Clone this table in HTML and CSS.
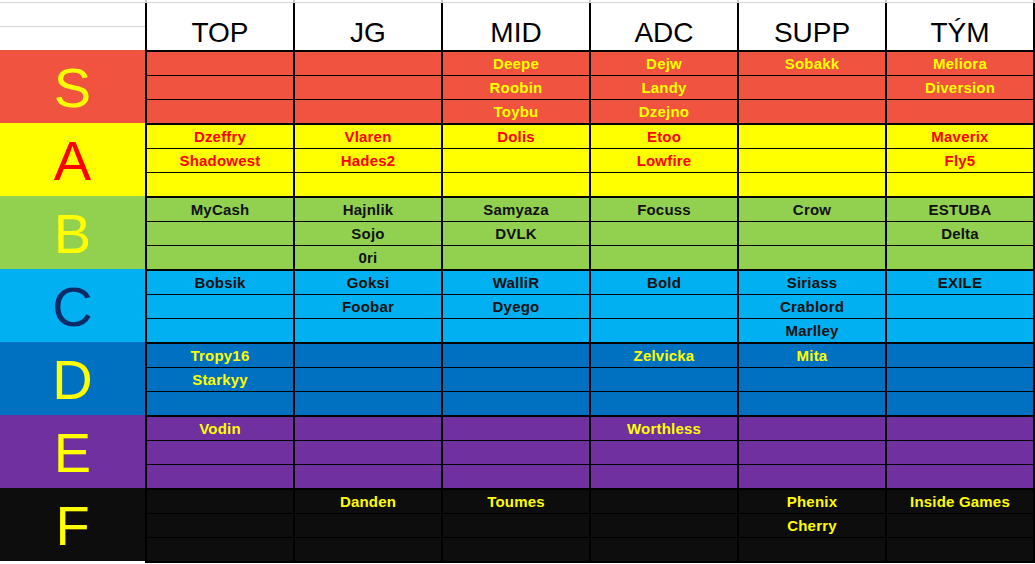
FILE: index.html
```html
<!DOCTYPE html>
<html lang="cs">
<head>
<meta charset="utf-8">
<title>Tier list</title>
<link rel="stylesheet" href="styles.css">
</head>
<body>
<div class="sheet">
  <div class="strip">
    <div class="strip-label"></div>
    <div class="strip-grid"><span></span><span></span><span></span><span></span><span></span><span></span></div>
  </div>

  <div class="head">
    <div class="head-label"><div class="half"></div><div class="half"></div></div>
    <div class="grid head-grid">
      <div class="hcell">TOP</div><div class="hcell">JG</div><div class="hcell">MID</div><div class="hcell">ADC</div><div class="hcell">SUPP</div><div class="hcell">TÝM</div>
    </div>
  </div>

  <div class="tier tier-s">
    <div class="label">S</div>
    <div class="grid">
      <div class="c"></div><div class="c"></div><div class="c">Deepe</div><div class="c">Dejw</div><div class="c">Sobakk</div><div class="c">Meliora</div>
      <div class="c"></div><div class="c"></div><div class="c">Roobin</div><div class="c">Landy</div><div class="c"></div><div class="c">Diversion</div>
      <div class="c"></div><div class="c"></div><div class="c">Toybu</div><div class="c">Dzejno</div><div class="c"></div><div class="c"></div>
    </div>
  </div>

  <div class="tier tier-a">
    <div class="label">A</div>
    <div class="grid">
      <div class="c">Dzeffry</div><div class="c">Vlaren</div><div class="c">Dolis</div><div class="c">Etoo</div><div class="c"></div><div class="c">Maverix</div>
      <div class="c">Shadowest</div><div class="c">Hades2</div><div class="c"></div><div class="c">Lowfire</div><div class="c"></div><div class="c">Fly5</div>
      <div class="c"></div><div class="c"></div><div class="c"></div><div class="c"></div><div class="c"></div><div class="c"></div>
    </div>
  </div>

  <div class="tier tier-b">
    <div class="label">B</div>
    <div class="grid">
      <div class="c">MyCash</div><div class="c">Hajnlik</div><div class="c">Samyaza</div><div class="c">Focuss</div><div class="c">Crow</div><div class="c">ESTUBA</div>
      <div class="c"></div><div class="c">Sojo</div><div class="c">DVLK</div><div class="c"></div><div class="c"></div><div class="c">Delta</div>
      <div class="c"></div><div class="c">0ri</div><div class="c"></div><div class="c"></div><div class="c"></div><div class="c"></div>
    </div>
  </div>

  <div class="tier tier-c">
    <div class="label">C</div>
    <div class="grid">
      <div class="c">Bobsik</div><div class="c">Goksi</div><div class="c">WalliR</div><div class="c">Bold</div><div class="c">Siriass</div><div class="c">EXILE</div>
      <div class="c"></div><div class="c">Foobar</div><div class="c">Dyego</div><div class="c"></div><div class="c">Crablord</div><div class="c"></div>
      <div class="c"></div><div class="c"></div><div class="c"></div><div class="c"></div><div class="c">Marlley</div><div class="c"></div>
    </div>
  </div>

  <div class="tier tier-d">
    <div class="label">D</div>
    <div class="grid">
      <div class="c">Tropy16</div><div class="c"></div><div class="c"></div><div class="c">Zelvicka</div><div class="c">Mita</div><div class="c"></div>
      <div class="c">Starkyy</div><div class="c"></div><div class="c"></div><div class="c"></div><div class="c"></div><div class="c"></div>
      <div class="c"></div><div class="c"></div><div class="c"></div><div class="c"></div><div class="c"></div><div class="c"></div>
    </div>
  </div>

  <div class="tier tier-e">
    <div class="label">E</div>
    <div class="grid">
      <div class="c">Vodin</div><div class="c"></div><div class="c"></div><div class="c">Worthless</div><div class="c"></div><div class="c"></div>
      <div class="c"></div><div class="c"></div><div class="c"></div><div class="c"></div><div class="c"></div><div class="c"></div>
      <div class="c"></div><div class="c"></div><div class="c"></div><div class="c"></div><div class="c"></div><div class="c"></div>
    </div>
  </div>

  <div class="tier tier-f">
    <div class="label">F</div>
    <div class="grid">
      <div class="c"></div><div class="c">Danden</div><div class="c">Toumes</div><div class="c"></div><div class="c">Phenix</div><div class="c">Inside Games</div>
      <div class="c"></div><div class="c"></div><div class="c"></div><div class="c"></div><div class="c">Cherry</div><div class="c"></div>
      <div class="c"></div><div class="c"></div><div class="c"></div><div class="c"></div><div class="c"></div><div class="c"></div>
    </div>
  </div>

  <div class="foot">
    <div class="foot-label"></div>
    <div class="foot-grid"></div>
  </div>
</div>
</body>
</html>
```

FILE: styles.css
```css
html, body {
  margin: 0;
  padding: 0;
  background: #ffffff;
}

.sheet {
  width: 1035px;
  font-family: "Liberation Sans", Arial, sans-serif;
}

/* top spreadsheet strip */
.strip {
  display: flex;
  height: 3px;
}
.strip-label {
  width: 145px;
  border-bottom: 1px solid #d4d4d4;
  box-sizing: border-box;
}
.strip-grid {
  display: flex;
  width: 890px;
  border-bottom: 1px solid #d4d4d4;
  box-sizing: border-box;
}
.strip-grid span {
  width: 148px;
  border-left: 2px solid #c8c8c8;
  box-sizing: border-box;
}
.strip-grid span:last-child {
  width: 150px;
  border-right: 2px solid #c8c8c8;
}

/* header */
.head {
  display: flex;
  height: 47px;
}
.head-label {
  width: 145px;
  display: flex;
  flex-direction: column;
}
.head-label .half {
  height: 23px;
  border-bottom: 1px solid #d4d4d4;
}
.head-label .half:last-child {
  border-bottom: none;
}

.grid {
  display: grid;
  grid-template-columns: repeat(6, 146px);
  grid-template-rows: repeat(3, 23px);
  column-gap: 2px;
  row-gap: 1px;
  padding: 2px 2px 0 2px;
  background: #000000;
  width: 890px;
  box-sizing: border-box;
}
.head-grid {
  grid-template-rows: 47px;
  padding-top: 0;
}
.hcell {
  background: #ffffff;
  display: flex;
  align-items: flex-end;
  justify-content: center;
  padding-bottom: 3px;
  box-sizing: border-box;
  font-size: 28px;
  color: #000000;
  line-height: 1;
}

/* tiers */
.tier {
  display: flex;
  height: 73px;
}
.label {
  width: 145px;
  display: flex;
  align-items: center;
  justify-content: center;
  font-size: 56px;
  line-height: 1;
  padding-top: 2px;
  box-sizing: border-box;
}
.c {
  display: flex;
  align-items: center;
  justify-content: center;
  font-size: 15px;
  font-weight: bold;
  letter-spacing: 0.2px;
  line-height: 1;
  padding-bottom: 1px;
  box-sizing: border-box;
}

.tier-s .label, .tier-s .c { background: #f0533f; }
.tier-s .label { color: #ffff00; }
.tier-s .c { color: #ffff00; }

.tier-a .label, .tier-a .c { background: #ffff00; }
.tier-a .label { color: #ff0000; }
.tier-a .c { color: #ff0000; }

.tier-b .label, .tier-b .c { background: #92d050; }
.tier-b .label { color: #ffff00; }
.tier-b .c { color: #111111; }

.tier-c .label, .tier-c .c { background: #00b0f0; }
.tier-c .label { color: #0b2a66; }
.tier-c .c { color: #111111; }

.tier-d .label, .tier-d .c { background: #0070c0; }
.tier-d .label { color: #ffff00; }
.tier-d .c { color: #ffff00; }

.tier-e .label, .tier-e .c { background: #7030a0; }
.tier-e .label { color: #ffff00; }
.tier-e .c { color: #ffff00; }

.tier-f .label, .tier-f .c { background: #0d0d0d; }
.tier-f .label { color: #ffff00; }
.tier-f .c { color: #ffff00; }

/* bottom edge */
.foot {
  display: flex;
  height: 3px;
}
.foot-label {
  width: 145px;
}
.foot-grid {
  width: 890px;
  height: 2px;
  background: #000000;
}
```
